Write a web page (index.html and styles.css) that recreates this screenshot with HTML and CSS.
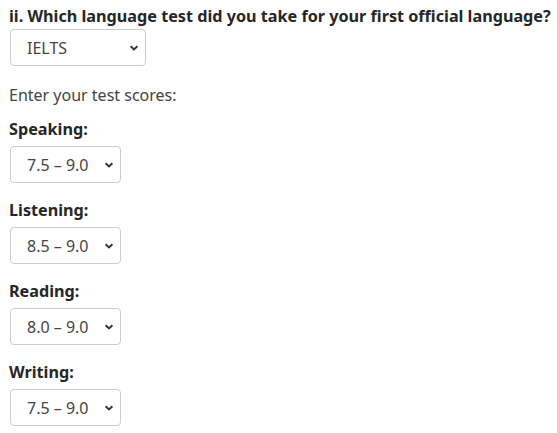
FILE: index.html
```html
<!DOCTYPE html>
<html>
<head>
<meta charset="utf-8">
<link rel="stylesheet" href="styles.css">
</head>
<body>
<div class="page">
  <h2 class="question">ii. Which language test did you take for your first official language?</h2>
  <select class="sel sel-test"><option>IELTS</option></select>
  <p class="intro">Enter your test scores:</p>
  <div class="group">
    <label class="lbl">Speaking:</label>
    <select class="sel sel-score"><option>7.5 – 9.0</option></select>
  </div>
  <div class="group">
    <label class="lbl">Listening:</label>
    <select class="sel sel-score"><option>8.5 – 9.0</option></select>
  </div>
  <div class="group">
    <label class="lbl">Reading:</label>
    <select class="sel sel-score"><option>8.0 – 9.0</option></select>
  </div>
  <div class="group">
    <label class="lbl">Writing:</label>
    <select class="sel sel-score"><option>7.5 – 9.0</option></select>
  </div>
</div>
</body>
</html>
```
FILE: styles.css
```css
html, body {
  margin: 0;
  padding: 0;
  background: #fff;
}
.page {
  display: flex;
  flex-direction: column;
  align-items: flex-start;
  padding: 4px 0 0 9px;
  font-family: "Noto Sans", "Open Sans", sans-serif;
  color: #333;
}
.question {
  margin: 0;
  font-size: 16.2px;
  line-height: 24px;
  font-weight: 700;
  color: #262626;
  white-space: nowrap;
}
.sel {
  appearance: none;
  -webkit-appearance: none;
  margin: 1px 0 0 1px;
  height: 37px;
  border: 1px solid #ccc;
  border-radius: 4px;
  background-color: #fff;
  background-image: url("data:image/svg+xml;utf8,<svg xmlns='http://www.w3.org/2000/svg' width='10' height='6' viewBox='0 0 10 6'><path d='M1.6 1.2 L5 4.5 L8.4 1.2' fill='none' stroke='%23333' stroke-width='1.9'/></svg>");
  background-repeat: no-repeat;
  background-position: right 6px center;
  font-family: "Noto Sans", "Open Sans", sans-serif;
  font-size: 16px;
  color: #444;
  padding: 0 0 0 16px;
}
.sel-test { width: 136px; }
.sel-score { width: 111px; }
.intro {
  margin: 17px 0 0 0;
  font-size: 16px;
  line-height: 24px;
  color: #444;
}
.group {
  display: flex;
  flex-direction: column;
  align-items: flex-start;
  margin-top: 10px;
}
.group + .group { margin-top: 15px; }
.lbl {
  font-size: 16.2px;
  line-height: 24px;
  font-weight: 700;
  color: #262626;
}
.group .sel { margin-top: 5px; }
```
